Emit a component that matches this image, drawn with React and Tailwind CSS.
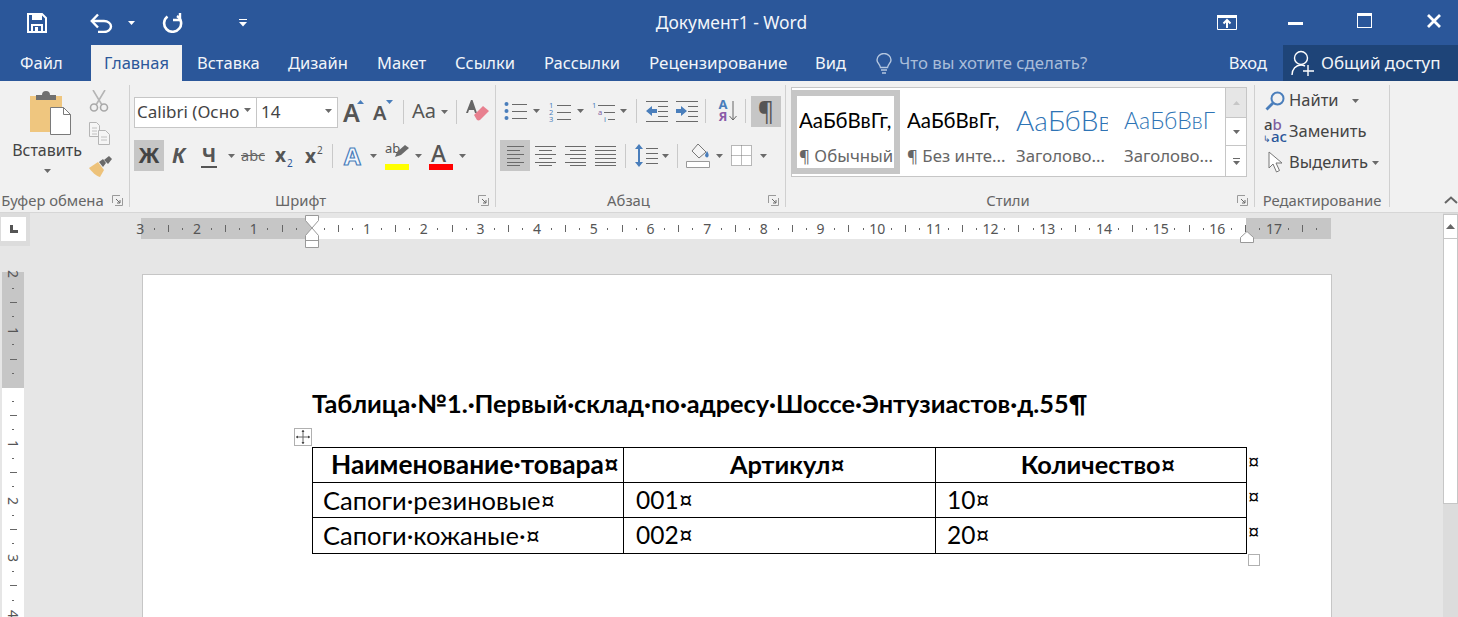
import React from "react";

const UI = "font-['Noto_Sans','Open_Sans',sans-serif]";
const DOC = "font-['Lato','Noto_Sans',sans-serif]";

function Caret({ className = "", color = "#6a6a6a" }) {
  return (
    <svg width="7" height="4" viewBox="0 0 7 4" className={"shrink-0 " + className}>
      <path d="M0 0h7L3.5 4z" fill={color} />
    </svg>
  );
}
function Sep({ className = "" }) {
  return <div className={"w-px h-[24px] bg-[#c9c9c9] shrink-0 " + className} />;
}
function Launcher() {
  return (
    <svg width="11" height="11" viewBox="0 0 11 11" className="shrink-0">
      <path d="M0.5 8V0.5H8M10.5 3v7.5H3" fill="none" stroke="#9a9a9a" />
      <path d="M4 4l4 4M8 5v3H5" fill="none" stroke="#6a6a6a" />
    </svg>
  );
}
function Group({ className, label, launcher, children }) {
  return (
    <div className={"flex flex-col h-[122px] border-r border-[#d0d0d0] shrink-0 " + className}>
      <div className="flex-1 min-h-0">{children}</div>
      <div className="flex items-center h-[14px]">
        <div className="flex-1 text-center text-[14.800px] leading-[20px] text-[#666] whitespace-nowrap">{label}</div>
        {launcher && (
          <div className="w-[24px] flex justify-start pl-[7px]">
            <Launcher />
          </div>
        )}
      </div>
    </div>
  );
}
function Lines({ ys, x1 = 0, x2 = 20, color = "#6a6a6a" }) {
  return ys.map((y, i) => {
    const a = Array.isArray(x1) ? x1[i] : x1;
    const b = Array.isArray(x2) ? x2[i] : x2;
    return <path key={i} d={`M${a} ${y + 0.5}H${b}`} stroke={color} fill="none" />;
  });
}
function AlignIcon({ x1, x2 }) {
  return (
    <svg width="21" height="21" viewBox="0 0 21 21">
      <Lines ys={[1, 5, 9, 13, 17, 20]} x1={x1} x2={x2} />
    </svg>
  );
}

function TitleBar() {
  return (
    <div className="grid grid-cols-[1fr_auto_1fr] items-center h-[45px] text-white">
      <div className="flex items-center">
        <svg width="20" height="20" viewBox="0 0 20 20" className="ml-[27px]">
          <path d="M1 1h14l4 4v14H1z" fill="none" stroke="#fff" strokeWidth="2" />
          <path d="M5 1h10v6H5z" fill="#fff" />
          <path d="M5 19v-7h10v7" fill="none" stroke="#fff" strokeWidth="2" />
          <path d="M8 14h3v5H8z" fill="#fff" />
        </svg>
        <svg width="23" height="20" viewBox="0 0 23 20" className="ml-[43px]">
          <path d="M2 8h12a7 5.5 0 0 1 0 11H8" fill="none" stroke="#fff" strokeWidth="2.4" />
          <path d="M8 1.5L1.8 8l6.2 6.5" fill="none" stroke="#fff" strokeWidth="2.4" />
        </svg>
        <Caret color="#fff" className="ml-[15px]" />
        <svg width="21" height="21" viewBox="0 0 21 21" className="ml-[27px]">
          <path d="M5.500 4.500a8.500 8.500 0 1 0 9.500 -0.500" fill="none" stroke="#fff" strokeWidth="2.600" />
          <path d="M19 1v7h-7" fill="none" stroke="#fff" strokeWidth="2.400" transform="translate(-1 0)" />
        </svg>
        <svg width="8" height="8" viewBox="0 0 8 8" className="ml-[56px]">
          <path d="M0 0.5h8" stroke="#fff" />
          <path d="M0 3h8L4 7.5z" fill="#fff" />
        </svg>
      </div>
      <div className="text-[17.400px] ml-[5px] text-[#f3f6fa]">Документ1 - Word</div>
      <div className="flex items-center justify-end">
        <svg width="20" height="15" viewBox="0 0 20 15">
          <path d="M0.5 0.5h19v14h-19z" fill="none" stroke="#fff" />
          <path d="M0 0h20v3H0z" fill="#fff" />
          <path d="M10 13V5M6.5 8.5L10 5l3.5 3.5" fill="none" stroke="#fff" strokeWidth="2" />
        </svg>
        <div className="w-[15px] h-[3px] bg-white ml-[51px] mt-[2px]" />
        <div className="w-[15px] h-[15px] border border-white border-t-[3px] ml-[54px] -mt-[4px]" />
        <svg width="14" height="14" viewBox="0 0 14 14" className="ml-[55px] mr-[17px] -mt-[4px]">
          <path d="M1 1l12 12M13 1L1 13" stroke="#fff" strokeWidth="2.8" />
        </svg>
      </div>
    </div>
  );
}

function TabRow() {
  return (
    <div className="flex items-stretch h-[36px] text-[16.500px] text-[#f2f5f9] whitespace-nowrap">
      <div className="ml-[20px] w-[42px] flex items-center">Файл</div>
      <div className="ml-[29px] w-[91px] bg-[#f1f1f1] text-[#2b579a] flex items-center justify-center">Главная</div>
      <div className="ml-[15px] w-[62px] flex items-center">Вставка</div>
      <div className="ml-[29px] w-[59px] flex items-center">Дизайн</div>
      <div className="ml-[30px] w-[49px] flex items-center">Макет</div>
      <div className="ml-[29px] w-[60px] flex items-center">Ссылки</div>
      <div className="ml-[29px] w-[76px] flex items-center">Рассылки</div>
      <div className="ml-[29px] w-[137px] flex items-center text-[17px]">Рецензирование</div>
      <div className="ml-[29px] w-[30px] flex items-center">Вид</div>
      <div className="ml-[31px] flex items-center">
        <svg width="16" height="21" viewBox="0 0 16 21">
          <path d="M4.5 14.5C4 11 1 10 1 7a7 6.5 0 0 1 14 0c0 3-3 4-3.5 7.5z" fill="none" stroke="#b4c6df" strokeWidth="1.4" />
          <path d="M5 17h6M6 20h4" stroke="#b4c6df" strokeWidth="1.6" />
        </svg>
      </div>
      <div className="ml-[7px] flex items-center text-[#a9bdd9] text-[16.800px]">Что вы хотите сделать?</div>
      <div className="flex-1" />
      <div className="flex items-center">Вход</div>
      <div className="ml-[16px] w-[175px] bg-[#1e4478] flex items-center">
        <svg width="23" height="27" viewBox="0 0 23 27" className="ml-[8px]">
          <circle cx="10" cy="8" r="6.5" fill="none" stroke="#fff" strokeWidth="1.4" />
          <path d="M1 25c0-6 4-10 9-10 2 0 3 .5 4 1" fill="none" stroke="#fff" strokeWidth="1.4" />
          <path d="M17 15v11M12 21h11" stroke="#fff" strokeWidth="1.4" />
        </svg>
        <span className="ml-[7px] text-[17px]">Общий доступ</span>
      </div>
    </div>
  );
}

function ClipboardGroup() {
  return (
    <Group className="w-[130px]" label="Буфер обмена" launcher>
      <div className="flex">
        <div className="w-[94px] flex flex-col items-center pt-[5px]">
          <svg width="42" height="45" viewBox="0 0 42 45" className="ml-[8px]">
            <path d="M0 6h32v36H0z" fill="#efc67f" />
            <path d="M6 5h6a4 4 0 0 1 8 0h6v5H6z" fill="#6f6f6f" />
            <path d="M20.5 17.5h13l7 7v20h-20z" fill="#fff" stroke="#7a7a7a" />
            <path d="M33.5 17.5v7h7" fill="none" stroke="#7a7a7a" />
          </svg>
          <div className="text-[16px] leading-[20px] text-[#444] mt-[5px]">Вставить</div>
          <Caret className="mt-[9px]" />
        </div>
        <div className="flex flex-col items-start pt-[5px] -ml-[5px]">
          <svg width="20" height="22" viewBox="0 0 20 22">
            <path d="M4 0l9 15M16 0L7 15" stroke="#b5b5b5" strokeWidth="1.6" fill="none" />
            <circle cx="5" cy="17.5" r="3.5" fill="none" stroke="#a8a8a8" strokeWidth="1.6" />
            <circle cx="15" cy="17.5" r="3.5" fill="none" stroke="#a8a8a8" strokeWidth="1.6" />
          </svg>
          <svg width="21" height="23" viewBox="0 0 21 23" className="mt-[10px]">
            <path d="M.5.5h7l3 3v11H.5z" fill="#f5f5f5" stroke="#b5b5b5" />
            <path d="M9.5 8.5h7l4 4v10h-11z" fill="#f5f5f5" stroke="#b5b5b5" />
            <path d="M3 6h5M3 9h5M3 12h5M12 15h6M12 18h6" stroke="#c0c0c0" />
          </svg>
          <svg width="23" height="21" viewBox="0 0 23 21" className="mt-[11px]">
            <path d="M0 12l9-6 6 8-4 7C7 20 3 16 0 12z" fill="#edc27a" />
            <path d="M10 6l4-3 3 4-3 4z" fill="#6a6a6a" />
            <path d="M15 4l5-4 3 3-4 5z" fill="#6a6a6a" />
          </svg>
        </div>
      </div>
    </Group>
  );
}

function FontGroup() {
  return (
    <Group className="w-[366px]" label="Шрифт" launcher>
      <div className="flex items-center pl-[4px] pt-[12px] h-[42px]">
        <div className="w-[123px] h-[31px] bg-white border border-[#c6c6c6] flex items-center pl-[2px] text-[17px] text-[#444]">
          <span className="flex-1 whitespace-nowrap overflow-hidden">Calibri (Осно</span>
          <Caret className="mr-[5px] -mt-[4px]" />
        </div>
        <div className="w-[81px] h-[31px] bg-white border border-[#c6c6c6] border-l-0 flex items-center pl-[4px] text-[17px] text-[#444]">
          <span className="flex-1">14</span>
          <Caret className="mr-[5px] -mt-[2px]" />
        </div>
        <div className="relative ml-[5px] w-[20px] text-[25px] leading-[30px] font-semibold text-[#555]">
          A
          <svg width="7" height="4" viewBox="0 0 7 4" className="absolute left-[14px] top-[3px]">
            <path d="M0 4h7L3.5 0z" fill="#4a7ebb" />
          </svg>
        </div>
        <div className="relative ml-[10px] w-[20px] text-[20px] leading-[30px] font-semibold text-[#555] pt-[2px]">
          A
          <svg width="7" height="4" viewBox="0 0 7 4" className="absolute left-[13px] top-[4px]">
            <path d="M0 0h7L3.5 4z" fill="#4a7ebb" />
          </svg>
        </div>
        <Sep className="ml-[10px]" />
        <div className="ml-[8px] text-[20px] leading-[30px] text-[#555] w-[26px] -mt-[2px]">Aa</div>
        <Caret className="ml-[3px]" />
        <Sep className="ml-[8px]" />
        <svg width="23" height="22" viewBox="0 0 23 22" className="ml-[9px] -mt-[2px]">
          <path d="M5 0L0 13h2l1-3h5l1 3h2L6.500 0z" fill="#666" />
          <path d="M8 15l9-9 6 5-9 9a3 3 0 0 1-3 0z" fill="#e8808f" />
        </svg>
      </div>
      <div className="flex items-center pl-[4px] pt-[13px]">
        <div className="w-[30px] h-[31px] bg-[#c6c6c6] flex items-center justify-center text-[21px] font-bold text-[#444]">Ж</div>
        <div className="ml-[6px] w-[17px] text-[21px] italic font-bold text-[#555] text-center">К</div>
        <div className="ml-[14px] w-[16px] text-[20px] leading-[22px] font-bold text-[#555] text-center border-b-2 border-[#555]">Ч</div>
        <Caret className="ml-[11px]" />
        <div className="ml-[6px] text-[14.5px] text-[#666] line-through w-[25px]">abc</div>
        <div className="ml-[9px] text-[19px] font-bold text-[#555] w-[20px] whitespace-nowrap">
          x<span className="text-[10px] font-normal text-[#2b579a] align-[-5px] ml-[1px]">2</span>
        </div>
        <div className="ml-[10px] text-[19px] font-bold text-[#555] w-[21px] whitespace-nowrap">
          x<span className="text-[10px] font-normal text-[#555] align-[9px] ml-[1px]">2</span>
        </div>
        <Sep className="ml-[6px]" />
        <div className="ml-[11px] w-[18px] text-[24px] leading-[28px] font-bold text-[#f4f8fd] [-webkit-text-stroke:1.2px_#4a7ebb]">A</div>
        <Caret className="ml-[8px]" />
        <div className="relative ml-[8px] w-[24px] h-[28px]">
          <span className="absolute left-0 top-[-3px] text-[13px] text-[#555]">ab</span>
          <svg width="14" height="14" viewBox="0 0 14 14" className="absolute left-[10px] top-[3px]">
            <path d="M0 12l2-5L10 0l4 3-8 7z" fill="#6a6a6a" />
          </svg>
          <div className="absolute left-0 bottom-0 w-[24px] h-[6px] bg-[#ffff00]" />
        </div>
        <Caret className="ml-[6px]" />
        <div className="relative ml-[7px] w-[24px] h-[28px]">
          <span className="absolute left-[2px] top-[-4px] text-[23px] leading-[30px] font-medium text-[#555]">A</span>
          <div className="absolute left-0 bottom-0 w-[24px] h-[6px] bg-[#ff0000]" />
        </div>
        <Caret className="ml-[6px]" />
      </div>
    </Group>
  );
}

function ParagraphGroup() {
  const blue = "#4a7ebb";
  return (
    <Group className="w-[290px]" label="Абзац" launcher>
      <div className="flex items-center h-[42px] pt-[10px] pl-[8px]">
        <svg width="23" height="20" viewBox="0 0 23 20">
          <circle cx="2.500" cy="3" r="2" fill={blue} />
          <circle cx="2.500" cy="10" r="2" fill={blue} />
          <circle cx="2.500" cy="17" r="2" fill={blue} />
          <Lines ys={[3, 10, 17]} x1={8} x2={23} />
        </svg>
        <Caret className="ml-[6px]" />
        <svg width="23" height="21" viewBox="0 0 23 21" className="ml-[8px]">
          <text x="1" y="7" fontSize="7.500" fill={blue} fontFamily="Noto Sans">1</text>
          <text x="1" y="14" fontSize="7.500" fill={blue} fontFamily="Noto Sans">2</text>
          <text x="1" y="21" fontSize="7.500" fill={blue} fontFamily="Noto Sans">3</text>
          <Lines ys={[4, 11, 18]} x1={9} x2={23} />
        </svg>
        <Caret className="ml-[6px]" />
        <svg width="23" height="21" viewBox="0 0 23 21" className="ml-[8px]">
          <text x="0" y="7" fontSize="7.500" fill={blue} fontFamily="Noto Sans">1</text>
          <text x="6" y="14" fontSize="7.500" fill="#7f5fa0" fontFamily="Noto Sans">a</text>
          <text x="12" y="21" fontSize="7.500" fill={blue} fontFamily="Noto Sans">i</text>
          <Lines ys={[4, 11, 18]} x1={[6, 12, 16]} x2={[23, 23, 23]} />
        </svg>
        <Caret className="ml-[5px]" />
        <Sep className="ml-[9px]" />
        <svg width="22" height="21" viewBox="0 0 22 21" className="ml-[9px]">
          <Lines ys={[0, 5, 10, 15, 20]} x1={[0, 12, 12, 12, 0]} x2={22} />
          <path d="M0 10l6-5v3h5v4H6v3z" fill={blue} />
        </svg>
        <svg width="22" height="21" viewBox="0 0 22 21" className="ml-[8px]">
          <Lines ys={[0, 5, 10, 15, 20]} x1={[0, 12, 12, 12, 0]} x2={22} />
          <path d="M11 10L5 5v3H0v4h5v3z" fill={blue} />
        </svg>
        <Sep className="ml-[7px]" />
        <div className="relative ml-[12px] w-[10px] h-[26px] text-[13px] leading-[12px] font-bold text-center">
          <div className="text-[#4a7ebb]">A</div>
          <div className="text-[#8a5aa8]">Я</div>
        </div>
        <svg width="8" height="20" viewBox="0 0 8 20" className="ml-[1px]">
          <path d="M4 0v19M.5 15L4 19l3.500-4" fill="none" stroke="#666" />
        </svg>
        <Sep className="ml-[8px]" />
        <div className="ml-[5px] w-[30px] h-[31px] bg-[#c6c6c6] flex items-center justify-center text-[25px] text-[#555]">¶</div>
      </div>
      <div className="flex items-center pl-[4px] pt-[13px]">
        <div className="w-[30px] h-[31px] bg-[#c6c6c6] flex items-center justify-center">
          <AlignIcon x1={[2, 2, 2, 2, 2, 2]} x2={[19, 15, 19, 15, 19, 15]} />
        </div>
        <div className="w-[30px] h-[31px] flex items-center justify-center">
          <AlignIcon x1={[0, 4, 0, 4, 0, 4]} x2={[21, 17, 21, 17, 21, 17]} />
        </div>
        <div className="w-[30px] h-[31px] flex items-center justify-center">
          <AlignIcon x1={[0, 5, 0, 5, 0, 5]} x2={[21, 21, 21, 21, 21, 21]} />
        </div>
        <div className="w-[30px] h-[31px] flex items-center justify-center">
          <AlignIcon x1={0} x2={21} />
        </div>
        <Sep className="ml-[5px]" />
        <svg width="24" height="23" viewBox="0 0 24 23" className="ml-[8px]">
          <path d="M5 0l4 5H6v13h3l-4 5-4-5h3V5H1z" fill={blue} />
          <Lines ys={[4, 9, 14, 19]} x1={12} x2={24} />
        </svg>
        <Caret className="ml-[4px]" />
        <Sep className="ml-[8px]" />
        <svg width="24" height="25" viewBox="0 0 24 25" className="ml-[8px]">
          <path d="M12 1l8 8-7 6-7-7z" fill="#f5f5f5" stroke="#777" />
          <path d="M21 8c2 3 2 5 1 6s-3 0-3-2z" fill={blue} />
          <path d="M.5 18.500h23v6H.5z" fill="#fff" stroke="#999" />
        </svg>
        <Caret className="ml-[6px]" />
        <svg width="21" height="21" viewBox="0 0 21 21" className="ml-[8px]">
          <path d="M.5.5h20v20H.5zM10.500.5v20M.5 10.500h20" fill="#fff" stroke="#777" strokeDasharray="1 1" />
        </svg>
        <Caret className="ml-[8px]" />
      </div>
    </Group>
  );
}

function StyleItem({ sample, sampleClass, name, nameClass = "", className }) {
  return (
    <div className={"flex flex-col shrink-0 " + className}>
      <div className={"h-[46px] flex items-center whitespace-nowrap overflow-hidden " + sampleClass}>{sample}</div>
      <div className={"text-[16.800px] leading-[26px] whitespace-nowrap text-[#666] " + nameClass}>{name}</div>
    </div>
  );
}

function StylesGroup() {
  return (
    <Group className="w-[469px]" label="Стили" launcher>
      <div className="pl-[5px] pt-[2px]">
        <div className="flex w-[456px] h-[90px] border border-[#c6c6c6] bg-white">
          <div className="w-[109px] h-[84px] border-[6px] border-[#c6c6c6] mt-[2px] -ml-[1px] shrink-0 flex flex-col pl-[2px]">
            <StyleItem className="w-[92px] mt-[1px]" sample="АаБбВвГг," sampleClass={DOC + " text-[20.500px] text-black"} name="¶ Обычный" />
          </div>
          <StyleItem className="w-[92px] ml-[7px] mt-[9px]" sample="АаБбВвГг," sampleClass={DOC + " text-[20.500px] text-black"} name="¶ Без инте..." />
          <StyleItem className="w-[92px] ml-[17px] mt-[9px]" sample="АаБбВв" sampleClass={DOC + " text-[28px] font-light text-[#2e74b5]"} name="Заголово..." />
          <StyleItem className="w-[92px] ml-[16px] mt-[9px]" sample="АаБбВвГ" sampleClass={DOC + " text-[23px] font-light text-[#2e74b5]"} name="Заголово..." />
          <div className="ml-auto w-[21px] flex flex-col border-l border-[#c6c6c6]">
            <div className="h-[30px] bg-[#e6e6e6] flex items-center justify-center border-b border-[#c6c6c6]">
              <svg width="7" height="4" viewBox="0 0 7 4"><path d="M0 4h7L3.500 0z" fill="#c6c6c6" /></svg>
            </div>
            <div className="h-[28px] flex items-center justify-center border-b border-[#c6c6c6]">
              <Caret />
            </div>
            <div className="flex-1 flex flex-col items-center justify-center">
              <div className="w-[7px] h-px bg-[#6a6a6a] mb-[2px]" />
              <Caret />
            </div>
          </div>
        </div>
      </div>
    </Group>
  );
}

function EditingGroup() {
  return (
    <Group className="w-[135px]" label="Редактирование">
      <div className="flex flex-col text-[16.500px] text-[#444]">
        <div className="flex items-center h-[31px]">
          <svg width="20" height="20" viewBox="0 0 20 20" className="ml-[10px]">
            <circle cx="12.500" cy="7.500" r="6" fill="none" stroke="#4a7ebb" strokeWidth="2" />
            <path d="M8 12l-6.500 6.500" stroke="#4a7ebb" strokeWidth="2.800" />
          </svg>
          <span className="ml-[4px]">Найти</span>
          <Caret className="ml-[13px]" />
        </div>
        <div className="flex items-center h-[31px]">
          <div className="ml-[8px] w-[26px] text-[15px] leading-[12px] font-medium">
            <div className="text-[#444] pl-[1px]">a<span className="text-[#7f5fa0]">b</span></div>
            <div className="text-[#2b579a] whitespace-nowrap"><span className="text-[9px]">↳</span>ac</div>
          </div>
          <span>Заменить</span>
        </div>
        <div className="flex items-center h-[31px]">
          <svg width="17" height="23" viewBox="0 0 17 23" className="ml-[13px]">
            <path d="M1 1v16l4-4 3.500 8 3-1.500L8 12h6z" fill="#fff" stroke="#777" />
          </svg>
          <span className="ml-[4px]">Выделить</span>
          <Caret className="ml-[4px]" />
        </div>
      </div>
    </Group>
  );
}

const units = [3, 2, 1, 0, ...Array.from({ length: 17 }, (_, i) => i + 1)];

function HRuler() {
  return (
    <div className="ml-[111px] mt-[5px] w-[1190px] h-[21px] bg-[linear-gradient(to_right,#c6c6c6_170px,#fff_170px,#fff_1105px,#c6c6c6_1105px)] shrink-0">
      <div className="flex h-full -ml-[7.800px]">
        {units.map((u, i) => (
          <React.Fragment key={i}>
            <div className="w-[14.175px] shrink-0 flex items-center justify-center text-[14px] text-[#555] overflow-visible">
              {u === 0 ? "" : u}
            </div>
            <div className="w-[14.175px] shrink-0 flex items-center justify-center"><div className="w-px h-[2px] bg-[#666]" /></div>
            <div className="w-[14.175px] shrink-0 flex items-center justify-center"><div className="w-px h-[7px] bg-[#666]" /></div>
            <div className="w-[14.175px] shrink-0 flex items-center justify-center"><div className="w-px h-[2px] bg-[#666]" /></div>
          </React.Fragment>
        ))}
      </div>
    </div>
  );
}

const vunits = [2, 1, 0, 1, 2, 3, 4];
function VRuler() {
  return (
    <div className="ml-[2px] w-[22px] h-[400px] shrink-0 bg-[linear-gradient(to_bottom,#c6c6c6_116px,#fff_116px)]">
      <div className="flex flex-col -mt-[5px]">
        {vunits.map((u, i) => (
          <React.Fragment key={i}>
            <div className="h-[14.175px] shrink-0 flex items-center justify-center text-[14px] leading-[14px] text-[#555] [writing-mode:vertical-rl]">
              {u === 0 ? "" : u}
            </div>
            <div className="h-[14.175px] shrink-0 flex items-center justify-center"><div className="w-[2px] h-px bg-[#666]" /></div>
            <div className="h-[14.175px] shrink-0 flex items-center justify-center"><div className="w-[7px] h-px bg-[#666]" /></div>
            <div className="h-[14.175px] shrink-0 flex items-center justify-center"><div className="w-[2px] h-px bg-[#666]" /></div>
          </React.Fragment>
        ))}
      </div>
    </div>
  );
}

function Cell({ children, head, className = "" }) {
  return (
    <div
      className={
        "flex items-center text-black whitespace-nowrap " +
        (head ? "justify-center font-bold text-[25.300px] " : "pl-[10px] text-[25.500px] ") +
        className
      }
    >
      {children}
    </div>
  );
}

function Page() {
  return (
    <div className={"relative ml-[118px] mt-[2px] w-[1190px] h-[400px] shrink-0 bg-white border border-[#c6c6c6] border-b-0 pl-[169px] pt-[108px] " + DOC}>
      <div className="text-[25.300px] leading-[40px] font-bold text-black whitespace-nowrap">
        Таблица·№1.·Первый·склад·по·адресу·Шоссе·Энтузиастов·д.55¶
      </div>
      <div className="relative mt-[24px] w-[935px]">
        <div className="absolute -left-[18px] -top-[19px] w-[18px] h-[18px] bg-white border border-[#b0b0b0] flex items-center justify-center">
          <svg width="14" height="14" viewBox="0 0 14 14">
            <path d="M7 0v14M0 7h14" stroke="#666" />
            <path d="M5.500 2L7 0l1.500 2zM5.500 12L7 14l1.500-2zM2 5.500L0 7l2 1.500zM12 5.500L14 7l-2 1.500z" fill="#444" />
          </svg>
        </div>
        <div className="grid grid-cols-[311px_312px_1fr] grid-rows-[35px_35px_35px] border border-black [&>div]:border-black">
          <Cell head className="border-r border-b !text-[26.300px] pl-[14px]">Наименование·товара¤</Cell>
          <Cell head className="border-r border-b pl-[16px]">Артикул¤</Cell>
          <Cell head className="border-b pl-[14px]">Количество¤</Cell>
          <Cell className="border-r border-b">Сапоги·резиновые¤</Cell>
          <Cell className="border-r border-b !pl-[12px] !text-[24.500px]">001¤</Cell>
          <Cell className="border-b !pl-[11px] !text-[24.500px]">10¤</Cell>
          <Cell className="border-r">Сапоги·кожаные·¤</Cell>
          <Cell className="border-r !pl-[12px] !text-[24.500px]">002¤</Cell>
          <Cell className="!pl-[11px] !text-[24.500px]">20¤</Cell>
        </div>
        <div className="absolute left-[935px] -top-[3px] flex flex-col text-[20px] leading-[35px] pl-[1px] font-['Noto_Sans',sans-serif]">
          <span>¤</span>
          <span>¤</span>
          <span>¤</span>
        </div>
        <div className="absolute left-[935px] top-[107px] w-[12px] h-[12px] ml-[1px] bg-white border border-[#b0b0b0]" />
      </div>
    </div>
  );
}

function Editor() {
  return (
    <div className="flex h-[404px] overflow-hidden bg-[#e6e6e6]">
      <div className="relative flex-1 flex flex-col min-w-0">
        <div className="flex h-[59px] shrink-0">
          <div className="w-[30px] h-[33px] bg-[#dcdcdc] pt-[4px] pl-[1px] shrink-0">
            <div className="w-[25px] h-[24px] bg-white flex items-center justify-center">
              <div className="w-[8px] h-[8px] border-l-[3px] border-b-[3px] border-[#555]" />
            </div>
          </div>
          <HRuler />
        </div>
        <div className="flex min-h-0">
          <VRuler />
          <Page />
        </div>
        <svg width="14" height="33" viewBox="0 0 14 33" className="absolute left-[304.500px] top-[2px]">
          <path d="M.5.5h13v5L7 13 .5 5.500zM7 13l6.500 7.500v12H.5v-12z" fill="#fff" stroke="#999" />
          <path d="M.5 25.500h13" stroke="#999" />
        </svg>
        <svg width="14" height="12" viewBox="0 0 14 12" className="absolute left-[1239.500px] top-[18px]">
          <path d="M7 .5l6.500 6v5H.5v-5z" fill="#fff" stroke="#999" />
        </svg>
      </div>
      <div className="w-[15px] shrink-0 pt-[1px] flex flex-col bg-[#dcdcdc]">
        <div className="h-[25px] bg-white border border-[#c6c6c6] flex items-center justify-center shrink-0">
          <svg width="9" height="5" viewBox="0 0 9 5"><path d="M0 5h9L4.500 0z" fill="#666" /></svg>
        </div>
        <div className="h-[265px] bg-white border border-t-0 border-[#c6c6c6] shrink-0" />
      </div>
    </div>
  );
}

export default function App() {
  return (
    <div className={"w-[1458px] h-[617px] overflow-hidden bg-[#e6e6e6] " + UI}>
      <div className="bg-[#2b579a]">
        <TitleBar />
        <TabRow />
      </div>
      <div className="relative h-[132px] bg-[#f1f1f1] border-b border-[#d6d6d6] pt-[4px] flex items-start">
        <ClipboardGroup />
        <FontGroup />
        <ParagraphGroup />
        <StylesGroup />
        <EditingGroup />
        <svg width="14" height="8" viewBox="0 0 14 8" className="absolute right-0 top-[115px]">
          <path d="M1 7l6-5.500L13 7" fill="none" stroke="#666" strokeWidth="2" />
        </svg>
      </div>
      <Editor />
    </div>
  );
}
